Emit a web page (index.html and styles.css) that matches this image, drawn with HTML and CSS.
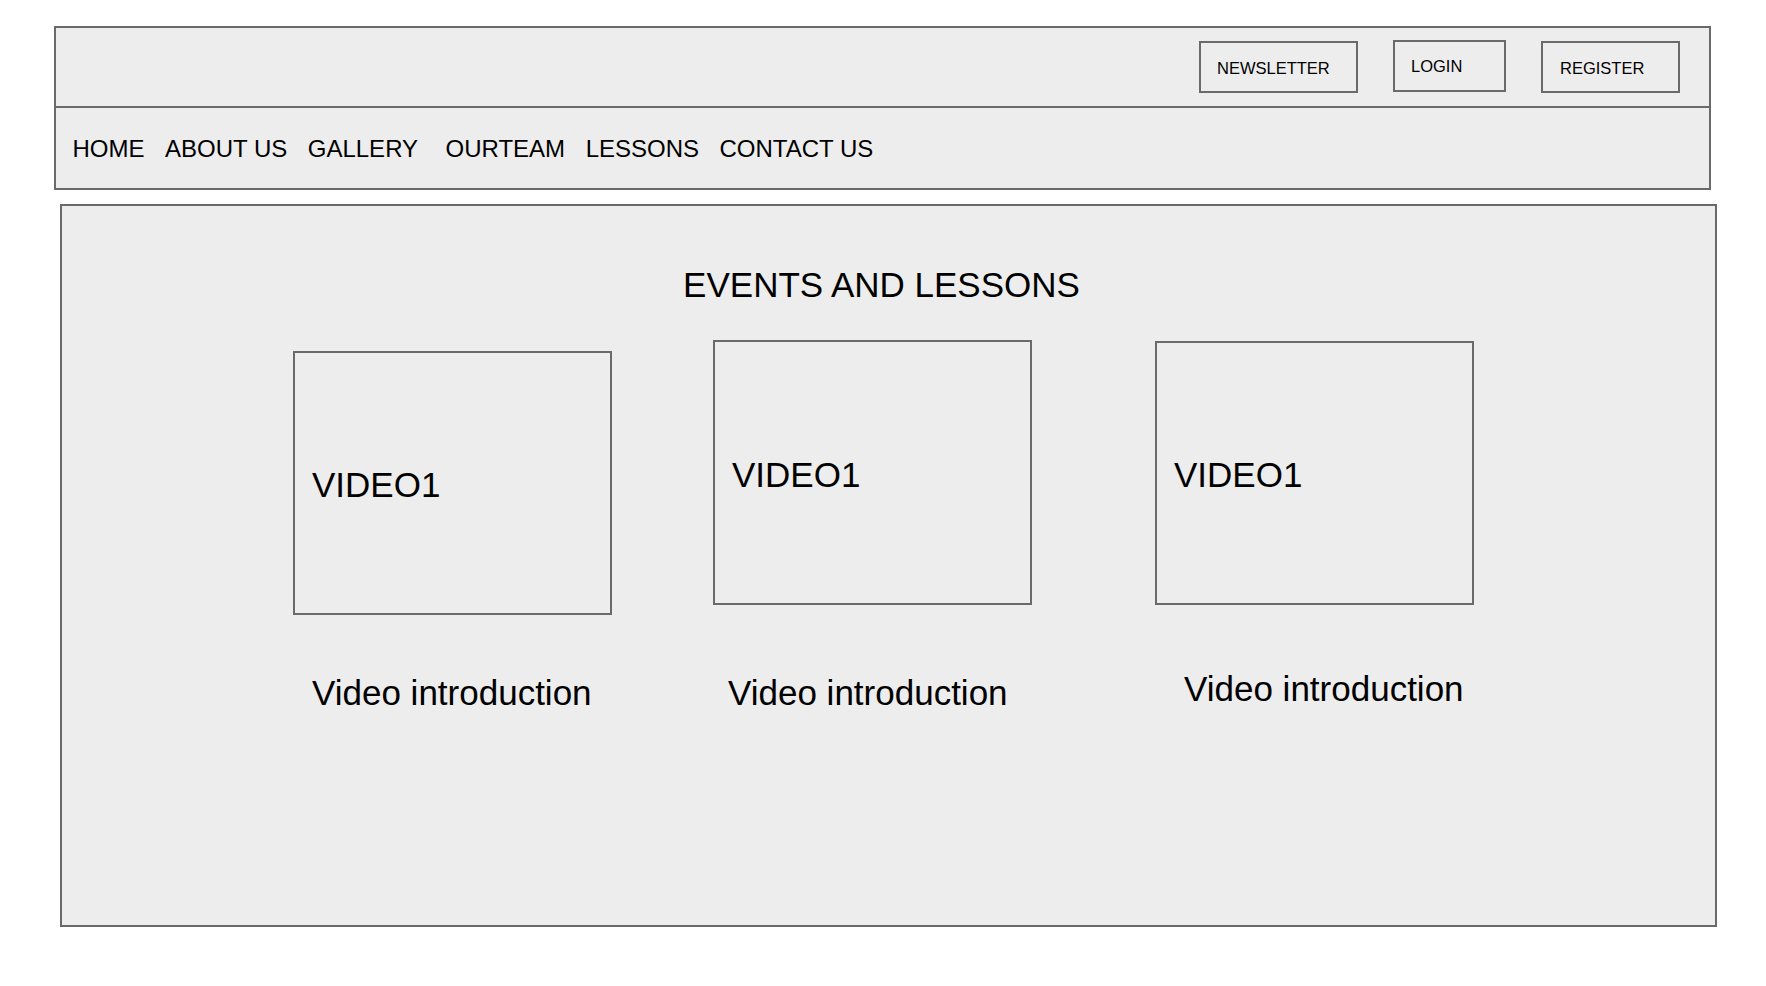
FILE: index.html
```html
<!DOCTYPE html>
<html lang="en">
<head>
<meta charset="utf-8">
<title>Events and Lessons</title>
<link rel="stylesheet" href="styles.css">
</head>
<body>
<header class="site-header">
  <div class="topbar">
    <a class="btn btn--newsletter" href="#">NEWSLETTER</a>
    <a class="btn btn--login" href="#">LOGIN</a>
    <a class="btn btn--register" href="#">REGISTER</a>
  </div>
  <nav class="nav">
    <a href="#">HOME</a>
    <a href="#">ABOUT US</a>
    <a href="#">GALLERY</a>
    <a class="nav__wide" href="#">OURTEAM</a>
    <a href="#">LESSONS</a>
    <a href="#">CONTACT US</a>
  </nav>
</header>
<main class="content">
  <h1 class="title">EVENTS AND LESSONS</h1>
  <div class="cards">
    <div class="card card--one">
      <div class="video">VIDEO1</div>
      <p class="caption">Video introduction</p>
    </div>
    <div class="card card--two">
      <div class="video">VIDEO1</div>
      <p class="caption">Video introduction</p>
    </div>
    <div class="card card--three">
      <div class="video">VIDEO1</div>
      <p class="caption">Video introduction</p>
    </div>
  </div>
</main>
</body>
</html>
```
FILE: styles.css
```css
html, body {
  margin: 0;
  padding: 0;
  background: #ffffff;
}

body {
  font-family: "Liberation Sans", Arial, sans-serif;
  color: #000;
}

a {
  color: #000;
  text-decoration: none;
}

.site-header {
  box-sizing: border-box;
  width: 1657px;
  margin: 26px 0 0 54px;
  border: 2px solid #6a6a6a;
  background: #ededed;
}

.topbar {
  box-sizing: border-box;
  height: 80px;
  border-bottom: 2px solid #6a6a6a;
  display: flex;
  justify-content: flex-end;
  align-items: flex-start;
  gap: 35px;
  padding: 13px 29px 0 0;
}

.btn {
  box-sizing: border-box;
  height: 52px;
  border: 2px solid #6a6a6a;
  display: flex;
  align-items: center;
  padding: 3px 0 0 16px;
  font-size: 16.5px;
  line-height: 19px;
}

.btn--newsletter { width: 159px; }
.btn--login { width: 113px; margin-top: -1px; padding-top: 1px; }
.btn--register { width: 139px; padding-left: 17px; }

.nav {
  box-sizing: border-box;
  height: 80px;
  display: flex;
  align-items: flex-start;
  gap: 20.5px;
  padding: 27px 0 0 16.5px;
  font-size: 24px;
  line-height: 28px;
}

.nav__wide {
  margin-left: 7px;
}

.content {
  box-sizing: border-box;
  width: 1657px;
  height: 723px;
  margin: 14px 0 0 60px;
  border: 2px solid #6a6a6a;
  background: #ededed;
  padding-top: 59px;
}

.title {
  margin: 0;
  padding-right: 14px;
  text-align: center;
  font-weight: normal;
  font-size: 35px;
  line-height: 40px;
}

.cards {
  display: flex;
  align-items: flex-start;
  margin-top: 35px;
}

.card {
  display: flex;
  flex-direction: column;
}

.video {
  box-sizing: border-box;
  width: 319px;
  height: 264px;
  border: 2px solid #6a6a6a;
  display: flex;
  align-items: center;
  padding: 4px 0 0 17px;
  font-size: 35px;
  line-height: 40px;
}

.caption {
  margin: 0;
  font-size: 35px;
  line-height: 40px;
}

.card--one { margin-left: 231px; margin-top: 11px; }
.card--one .caption { margin-top: 58px; padding-left: 19px; }

.card--two { margin-left: 101px; }
.card--two .video { height: 265px; }
.card--two .caption { margin-top: 68px; padding-left: 15px; }

.card--three { margin-left: 123px; margin-top: 1px; }
.card--three .caption { margin-top: 64px; padding-left: 29px; }
```
